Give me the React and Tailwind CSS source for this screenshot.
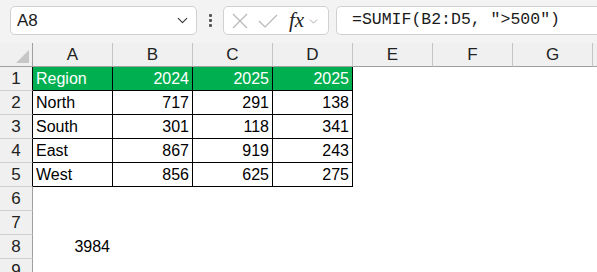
import React from 'react';
import { ChevronDown } from 'lucide-react';

const cols = ['A', 'B', 'C', 'D', 'E', 'F', 'G'];

const data = [
  ['North', 717, 291, 138],
  ['South', 301, 118, 341],
  ['East', 867, 919, 243],
  ['West', 856, 625, 275],
];

const font = { fontFamily: '"Liberation Sans", Arial, sans-serif' };

const RowHead = ({ n, dark }) => (
  <div
    className={`h-[24px] flex items-center justify-center bg-[#f0f0f0] border-b border-b-[#cfcfcf] border-r ${
      dark ? 'border-r-black' : 'border-r-[#a0a0a0]'
    } text-[17px] text-[#222]`}
  >
    {n}
  </div>
);

const App = () => {
  return (
    <div className="w-[597px] h-[272px] overflow-hidden bg-white" style={font}>
      {/* Formula bar */}
      <div className="h-[43px] bg-[#f3f3f3] flex items-start pt-[6px] pl-[10px]">
        <div className="w-[187px] h-[29px] bg-white border border-[#d1d1d1] rounded-[5px] flex items-center justify-between pl-[6px] pr-[5px]">
          <span className="text-[17px] text-[#1a1a1a]">A8</span>
          <ChevronDown className="w-[17px] h-[17px] text-[#333]" strokeWidth={1.6} />
        </div>
        <div className="w-[26px] h-[29px] flex flex-col items-center justify-center gap-[2px]">
          <span className="w-[3px] h-[3px] bg-[#555] rounded-[1px]" />
          <span className="w-[3px] h-[3px] bg-[#555] rounded-[1px]" />
          <span className="w-[3px] h-[3px] bg-[#555] rounded-[1px]" />
        </div>
        <div className="w-[106px] h-[29px] bg-white border border-[#d1d1d1] rounded-[5px] flex items-center pl-[8px]">
          <svg width="16" height="16" viewBox="0 0 16 16" className="text-[#b5b5b5]">
            <path d="M1 1 L15 15 M15 1 L1 15" stroke="currentColor" strokeWidth="1.1" fill="none" />
          </svg>
          <svg width="20" height="16" viewBox="0 0 20 16" className="ml-[10px] text-[#b5b5b5]">
            <path d="M1 8 L7 14 L19 2" stroke="currentColor" strokeWidth="1.1" fill="none" />
          </svg>
          <span
            className="ml-[11px] text-[21px] italic text-[#222] leading-none"
            style={{ fontFamily: '"Liberation Serif", "Times New Roman", serif' }}
          >
            fx
          </span>
          <ChevronDown className="w-[13px] h-[13px] text-[#9a9a9a] ml-[3px] mt-[2px]" strokeWidth={1.5} />
        </div>
        <div className="ml-[7px] flex-1 h-[29px] bg-white border border-[#d1d1d1] border-r-0 rounded-l-[5px] flex items-center pl-[15px]">
          <span
            className="text-[16.5px] text-[#1a1a1a]"
            style={{ fontFamily: '"Liberation Mono", "Courier New", monospace' }}
          >
            =SUMIF(B2:D5, "&gt;500")
          </span>
        </div>
      </div>

      {/* Grid */}
      <div className="grid grid-cols-[33px_repeat(7,80px)_1fr]">
        {/* Column header row */}
        <div className="h-[24px] bg-[#f0f0f0] border-b border-b-[#a0a0a0] border-r border-r-[#a0a0a0] relative">
          <div className="absolute right-[3px] bottom-[3px] w-0 h-0 border-l-[13px] border-l-transparent border-b-[13px] border-b-[#c6c6c6]" />
        </div>
        {cols.map((c) => (
          <div
            key={c}
            className="h-[24px] bg-[#f0f0f0] border-b border-b-[#a0a0a0] border-r border-r-[#c4c4c4] flex items-center justify-center text-[17px] text-[#222]"
          >
            {c}
          </div>
        ))}
        <div className="h-[24px] bg-[#f0f0f0] border-b border-b-[#a0a0a0]" />

        {/* Row 1 */}
        <RowHead n={1} dark />
        <div className="h-[24px] bg-[#00b050] border-r border-b border-black text-white text-[16px] flex items-center pl-[3px]">
          Region
        </div>
        {['2024', '2025', '2025'].map((y, i) => (
          <div
            key={i}
            className="h-[24px] bg-[#00b050] border-r border-b border-black text-white text-[16px] flex items-center justify-end pr-[3px]"
          >
            {y}
          </div>
        ))}
        <div className="col-span-4 h-[24px]" />

        {/* Rows 2-5 */}
        {data.map((r, i) => (
          <React.Fragment key={r[0]}>
            <RowHead n={i + 2} dark />
            <div className="h-[24px] border-r border-b border-black text-[16px] text-black flex items-center pl-[3px]">
              {r[0]}
            </div>
            {r.slice(1).map((v, j) => (
              <div
                key={j}
                className="h-[24px] border-r border-b border-black text-[16px] text-black flex items-center justify-end pr-[3px]"
              >
                {v}
              </div>
            ))}
            <div className="col-span-4 h-[24px]" />
          </React.Fragment>
        ))}

        {/* Rows 6-9 */}
        <RowHead n={6} />
        <div className="col-span-8 h-[24px]" />
        <RowHead n={7} />
        <div className="col-span-8 h-[24px]" />
        <RowHead n={8} />
        <div className="h-[24px] text-[16px] text-black flex items-center justify-end pr-[3px]">3984</div>
        <div className="col-span-7 h-[24px]" />
        <RowHead n={9} />
        <div className="col-span-8 h-[24px]" />
      </div>
    </div>
  );
};

export default App;
